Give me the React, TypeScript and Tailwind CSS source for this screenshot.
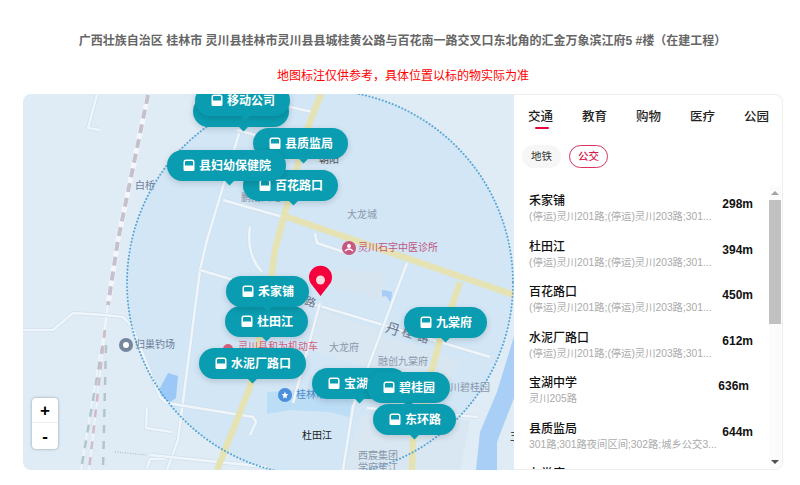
import { Fragment } from 'react';

const whiteRoads = [
  'M207 240 L240 130 M207 240 L200 270 L178 440 L167 470',
  'M200 270 L490 357',
  'M23 330 L53 330 L73 313 L105 315 L123 317 L132 327 L160 397 L167 403 L253 417 L256 422 L250 435',
  'M407 263 L353 407 L343 470',
  'M320 303 L293 403',
  'M150 455 L267 467',
  'M147 468 L150 459 L165 459',
  'M367 408 L477 417',
  'M97 95 L88 128 L100 130',
  'M290 107 L313 112',
  'M237 130 L262 137',
  'M223 200 L283 217',
  'M315 233 L317 243 L347 253',
  'M250 227 Q246 255 262 272',
  'M147 408 L146 428 L172 432',
];

const mapLabels = [
  { text: '白桥', cls: 'left-[112px] top-[85px] text-[#6f7f96]' },
  { text: '大龙城', cls: 'left-[324px] top-[114px] text-[#8b97aa]' },
  { text: '灵川石宇中医诊所', cls: 'left-[335px] top-[147px] text-[#c0567f]' },
  { text: '归巢钓场', cls: 'left-[112px] top-[244px] text-[#6f7f96]' },
  { text: '灵川县和为机动车', cls: 'left-[215px] top-[246px] text-[#d0607e]' },
  { text: '大龙府', cls: 'left-[306px] top-[247px] text-[#8b97aa]' },
  { text: '融创九棠府', cls: 'left-[355px] top-[261px] text-[#8b97aa]' },
  { text: '川碧桂园', cls: 'left-[427px] top-[287px] text-[#8b97aa]' },
  { text: '桂林市灵川县', cls: 'left-[273px] top-[294px] text-[#4d8fd0]' },
  { text: '杜田江', cls: 'left-[279px] top-[335px] text-[#222222]' },
  { text: '西宸集团', cls: 'left-[335px] top-[355px] text-[#8b97aa]' },
  { text: '学府笙江', cls: 'left-[335px] top-[367px] text-[#8b97aa]' },
  { text: '朝阳', cls: 'left-[296px] top-[59px] text-[#555555]' },
  { text: '鹏南西路', cls: 'left-[218px] top-[97px] text-[#8b97aa]' },
  { text: '王', cls: 'left-[487px] top-[336px] text-[#222222]' },
];

const markers = [
  { name: '', cls: 'left-[170px] top-[2px] z-10', tail: 'left-[47px]' },
  { name: '移动公司', cls: 'left-[172px] top-[-9px] z-10', tail: 'left-[47px]' },
  { name: '县质监局', cls: 'left-[230px] top-[34px] z-20', tail: 'left-[47px]' },
  { name: '百花路口', cls: 'left-[220px] top-[76px] z-20', tail: 'left-[47px]' },
  { name: '县妇幼保健院', cls: 'left-[144px] top-[56px] z-30', tail: 'left-[59px]' },
  { name: '杜田江', cls: 'left-[202px] top-[212px] z-20', tail: 'left-[38px]' },
  { name: '禾家铺', cls: 'left-[203px] top-[182px] z-30', tail: 'left-[38px]' },
  { name: '水泥厂路口', cls: 'left-[176px] top-[254px] z-30', tail: 'left-[50px]' },
  { name: '九棠府', cls: 'left-[381px] top-[213px] z-20', tail: 'left-[38px]' },
  { name: '宝湖中学', cls: 'left-[289px] top-[274px] z-20', tail: 'left-[44px]' },
  { name: '碧桂园', cls: 'left-[344px] top-[278px] z-30', tail: 'left-[38px]' },
  { name: '东环路', cls: 'left-[350px] top-[310px] z-30', tail: 'left-[38px]' },
];

const tabs = ['交通', '教育', '购物', '医疗', '公园'];

const stops = [
  { name: '禾家铺', lines: '(停运)灵川201路;(停运)灵川203路;301...', dist: '298m', pad: 'pr-[16px]' },
  { name: '杜田江', lines: '(停运)灵川201路;(停运)灵川203路;301...', dist: '394m', pad: 'pr-[16px]' },
  { name: '百花路口', lines: '(停运)灵川201路;(停运)灵川203路;301...', dist: '450m', pad: 'pr-[16px]' },
  { name: '水泥厂路口', lines: '(停运)灵川201路;(停运)灵川203路;301...', dist: '612m', pad: 'pr-[16px]' },
  { name: '宝湖中学', lines: '灵川205路', dist: '636m', pad: 'pr-[20px]' },
  { name: '县质监局', lines: '301路;301路夜间区间;302路;城乡公交3...', dist: '644m', pad: 'pr-[16px]' },
  { name: '九棠府', lines: '(停运)灵川201路', dist: '660m', pad: 'pr-[16px]' },
];

function BusIcon() {
  return (
    <svg width="12" height="13" viewBox="0 0 12 13" className="shrink-0">
      <path
        fillRule="evenodd"
        fill="#fff"
        d="M3 0.5h6a2.5 2.5 0 0 1 2.5 2.5v7.5a1.5 1.5 0 0 1-1.5 1.5H2a1.5 1.5 0 0 1-1.5-1.5V3A2.5 2.5 0 0 1 3 0.5zM3 2a1 1 0 0 0-1 1v3.5h8V3a1 1 0 0 0-1-1z"
      />
    </svg>
  );
}

function MapRoads() {
  return (
    <svg viewBox="23 94 491 376" className="absolute inset-0 h-full w-full">
      <rect x="23" y="94" width="491" height="376" fill="#dfecf6" />
      <circle cx="320" cy="283" r="193" fill="#d2e6f6" />

      {/* water and blocks */}
      <path d="M267 392 L353 388 L353 418 L330 412 L290 410 L267 414 Z" fill="#bcddf6" />
      <path d="M168 373 L178 376 L176 398 L169 403 L158 392 Z" fill="#9cc8f8" />
      <path d="M514 336 L497 392 L480 432 L476 470 L497 470 L497 442 L514 398 Z" fill="#a9cff7" />
      <path d="M373 292 Q380 288 392 292 L391 303 L386 296 Q378 298 373 292 Z" fill="#a6cdf6" />
      <path d="M312 268 L382 272 L382 300 L334 288 Z" fill="#d7e5f1" />
      <path d="M320 310 L380 330 L368 368 L308 350 Z" fill="#d9e7f2" />
      <path d="M380 335 L460 360 L450 385 L368 368 Z" fill="#d8e6f2" />
      <path d="M360 415 L470 420 L460 470 L345 470 Z" fill="#d9e7f2" />

      {/* rail line */}
      <path d="M148 95 L118 240 L108 305" fill="none" stroke="#f3f6fa" strokeWidth="5" />
      <path d="M148 95 L118 240 L108 305" fill="none" stroke="#c5bfce" strokeWidth="4" strokeDasharray="9 6" />
      <path d="M108 305 L81 470 M108 305 L89 470" fill="none" stroke="#f1f6fa" strokeWidth="1.5" />
      <path d="M105 330 L81 470 M106 345 L103 470" fill="none" stroke="#b4c4cc" strokeWidth="2.5" strokeDasharray="8 8" />
      <path d="M105 330 L89 470" fill="none" stroke="#d2bac8" strokeWidth="2.5" strokeDasharray="8 8" />

      {/* white roads */}
      {whiteRoads.map((d) => (
        <Fragment key={d}>
          <path d={d} fill="none" stroke="#d0dfec" strokeWidth="4" strokeLinejoin="round" />
          <path d={d} fill="none" stroke="#eff6fb" strokeWidth="2.5" strokeLinejoin="round" />
        </Fragment>
      ))}

      {/* yellow roads */}
      <path
        d="M321 94 L308 127 L275 250 L272 273 L250 387 L217 470 M287 217 L514 295 M460 282 L440 340 L413 440 L412 470"
        fill="none"
        stroke="#e5e2b4"
        strokeWidth="6.5"
      />

      <circle
        cx="320"
        cy="283"
        r="193"
        fill="none"
        stroke="#58a6d8"
        strokeWidth="2"
        strokeLinecap="round"
        strokeDasharray="0.1 3.4"
      />
      <path d="M115 452 L147 455" stroke="#a9b6c6" strokeWidth="1" strokeDasharray="1 1.5" />

      {/* poi icons */}
      <circle cx="349" cy="248" r="7" fill="#c9587f" />
      <circle cx="349" cy="246" r="2" fill="#fff" />
      <path d="M345 251 Q349 247 353 251" stroke="#fff" strokeWidth="1.2" fill="none" />
      <circle cx="126" cy="345" r="7" fill="#75869e" />
      <circle cx="126" cy="345" r="3" fill="#fff" />
      <circle cx="228" cy="349" r="5" fill="#d9607e" />
      <circle cx="285" cy="395" r="7" fill="#4a90dc" />
      <path d="M285 391.5 L286 394 L288.5 394.2 L286.5 396 L287 398.5 L285 397.2 L283 398.5 L283.5 396 L281.5 394.2 L284 394 Z" fill="#fff" />

      {/* target pin */}
      <path d="M320.5 296 L312 285 A11.5 11.5 0 1 1 329 285 Z" fill="#f5003c" />
      <circle cx="320.5" cy="280" r="4.5" fill="#f4d9df" />
    </svg>
  );
}

function MapPanel() {
  return (
    <div className="relative h-full w-[491px] shrink-0 overflow-hidden rounded-l-lg">
      <MapRoads />

      {mapLabels.map((l) => (
        <span key={l.text} className={`absolute whitespace-nowrap text-[10px] leading-[14px] ${l.cls}`}>
          {l.text}
        </span>
      ))}
      <span className="absolute left-[363px] top-[227px] rotate-[18deg] text-[14px] leading-[16px] text-[#66758a]">丹</span>
      <span className="absolute left-[379px] top-[232px] rotate-[18deg] text-[11px] leading-[14px] text-[#66758a]">桂</span>
      <span className="absolute left-[395px] top-[237px] rotate-[18deg] text-[11px] leading-[14px] text-[#66758a]">路</span>
      <span className="absolute left-[282px] top-[201px] rotate-[18deg] text-[11px] leading-[14px] text-[#66758a]">路</span>

      {markers.map((m, i) => (
        <div
          key={i}
          className={`absolute flex h-[31px] items-center gap-[4px] whitespace-nowrap rounded-full bg-[#0a9cb0] pl-4 pr-[15px] text-[12px] font-bold text-white shadow-[0_2px_6px_rgba(0,0,0,0.15)] ${m.cls}`}
        >
          {m.name ? <BusIcon /> : <div className="h-[13px] w-[65px]" />}
          {m.name}
          <div className={`absolute top-[27px] h-[7px] w-[7px] rotate-45 bg-[#0a9cb0] ${m.tail}`} />
        </div>
      ))}

      {/* zoom buttons */}
      <div className="absolute left-[9px] top-[304px] z-40 flex h-[51px] w-[26px] flex-col rounded-[4px] bg-white font-bold text-black shadow-[0_0_3px_rgba(0,0,0,0.35)]">
        <button className="flex h-[25px] items-center justify-center border-b border-[#eeeeee] text-[17px] leading-none">+</button>
        <button className="flex h-[26px] items-center justify-center text-[17px] leading-none">-</button>
      </div>
    </div>
  );
}

function SidePanel() {
  return (
    <div className="flex h-full flex-1 flex-col overflow-hidden rounded-r-lg border border-l-0 border-[#eeeeee] bg-white">
      <div className="flex h-[50px] shrink-0 gap-[29px] pl-[14px] pt-[13px]">
        {tabs.map((t, i) => (
          <div key={t} className="relative w-[25px] whitespace-nowrap text-[12.5px] font-medium leading-[18px] text-[#222222]">
            {t}
            {i === 0 && <div className="absolute left-[7px] top-[19px] h-[2px] w-[14px] rounded-full bg-[#e6003c]" />}
          </div>
        ))}
      </div>

      <div className="flex gap-2 pl-[8px]">
        <div className="flex h-[23px] w-[39px] items-center justify-center rounded-full bg-[#f5f6f5] text-[10.5px] text-[#333333]">地铁</div>
        <div className="flex h-[23px] w-[39px] items-center justify-center rounded-full border border-[#d9345f] text-[10.5px] font-medium text-[#d9184c]">公交</div>
      </div>

      <div className="mt-[18px] flex min-h-0 flex-1">
        <div className="min-w-0 flex-1 overflow-hidden pl-[15px] pt-[7px]">
          {stops.map((s) => (
            <div key={s.name} className={`flex h-[45.5px] items-start justify-between ${s.pad}`}>
              <div className="min-w-0">
                <div className="text-[12px] font-medium leading-[16px] text-[#111111]">{s.name}</div>
                <div className="whitespace-nowrap text-[10.3px] leading-[16px] text-[#aaaaaa]">{s.lines}</div>
              </div>
              <div className="mt-[3px] font-['Liberation_Sans',sans-serif] text-[12px] font-bold leading-[16px] text-[#111111]">{s.dist}</div>
            </div>
          ))}
        </div>

        {/* scrollbar */}
        <div className="mr-[1px] flex w-[12px] shrink-0 flex-col items-center bg-[#fbfbfb]">
          <div className="flex h-[14px] items-center justify-center">
            <div className="h-0 w-0 border-x-[4px] border-b-[4px] border-x-transparent border-b-[#a3a3a3]" />
          </div>
          <div className="h-[124px] w-full bg-[#c1c1c1]" />
          <div className="flex-1" />
          <div className="flex h-[14px] items-center justify-center">
            <div className="h-0 w-0 border-x-[4px] border-t-[4px] border-x-transparent border-t-[#505050]" />
          </div>
        </div>
      </div>
    </div>
  );
}

export default function App() {
  return (
    <div className="h-[485px] w-[800px] overflow-hidden bg-white font-['Liberation_Sans','Noto_Sans_CJK_SC',sans-serif]">
      <div className="pl-[5px] pt-[33px] text-center text-[12px] font-bold leading-[16px] text-[#666666]">
        广西壮族自治区 桂林市 灵川县桂林市灵川县县城桂黄公路与百花南一路交叉口东北角的汇金万象滨江府5 #楼（在建工程）
      </div>
      <div className="mt-[19px] pl-[6px] text-center text-[12px] leading-[16px] text-[#ff0000]">
        地图标注仅供参考，具体位置以标的物实际为准
      </div>
      <div className="ml-[23px] mt-[10px] flex h-[376px] w-[760px]">
        <MapPanel />
        <SidePanel />
      </div>
    </div>
  );
}
